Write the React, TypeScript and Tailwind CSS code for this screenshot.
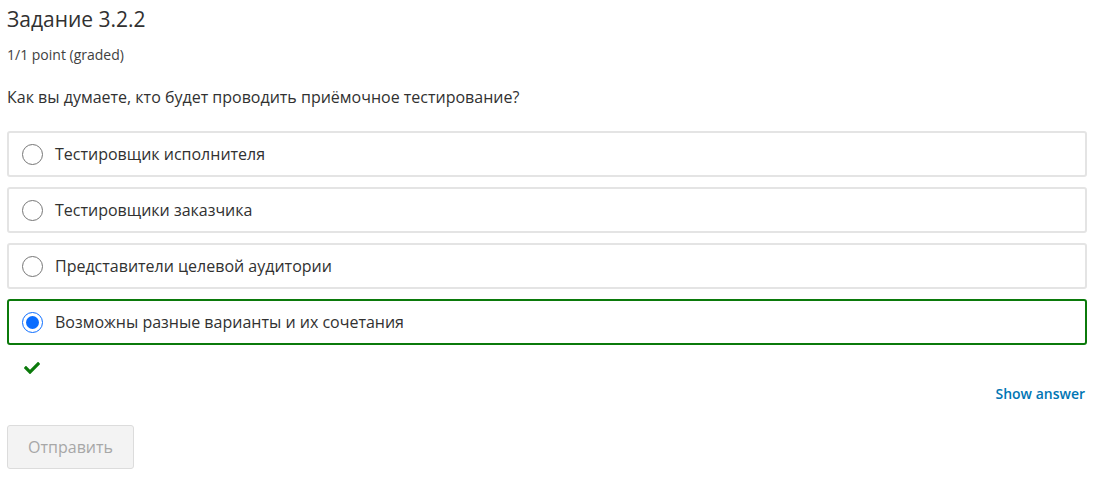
import { FaCheck } from "react-icons/fa"

const options = [
  "Тестировщик исполнителя",
  "Тестировщики заказчика",
  "Представители целевой аудитории",
  "Возможны разные варианты и их сочетания",
]

export default function App() {
  const selected = 3

  return (
    <div className="w-[1100px] h-[479px] bg-white px-[7px] pt-[4px] text-[#313131] font-['Open_Sans',sans-serif]">
      <h2 className="text-[21px] leading-[30px]">Задание 3.2.2</h2>
      <div className="mt-[11px] text-[14px] leading-[20px] text-[#414141]">1/1 point (graded)</div>
      <p className="mt-[20px] text-[16px] leading-[24px]">
        Как вы думаете, кто будет проводить приёмочное тестирование?
      </p>

      <div className="mt-[22px] w-[1080px] flex flex-col gap-[10px]">
        {options.map((o, i) => (
          <label
            key={i}
            className={
              i === selected
                ? "h-[46px] flex items-center gap-[12px] px-[13px] rounded-[3px] border-2 border-[#0b7a0b]"
                : "h-[46px] flex items-center gap-[12px] px-[13px] rounded-[3px] border-2 border-[#e4e4e4]"
            }
          >
            {i === selected ? (
              <span className="w-[21px] h-[21px] rounded-full border-[1.5px] border-[#0a6cff] flex items-center justify-center">
                <span className="w-[13px] h-[13px] rounded-full bg-[#0a6cff]" />
              </span>
            ) : (
              <span className="w-[21px] h-[21px] rounded-full border border-[#767676] bg-white" />
            )}
            <span className="text-[16px]">{o}</span>
          </label>
        ))}
      </div>

      <div className="pl-[17px] pt-[15px] h-[36px]">
        <FaCheck size={16} className="text-[#0b7a0b]" />
      </div>

      <div className="w-[1080px] flex justify-end pr-[2px] mt-[2px]">
        <a className="text-[14px] font-semibold text-[#0075b4]">Show answer</a>
      </div>

      <button
        disabled
        className="mt-[21px] w-[127px] h-[44px] rounded-[3px] border border-[#dcdcdc] bg-[#f3f3f3] text-[16px] text-[#a7a7a7]"
      >
        Отправить
      </button>
    </div>
  )
}
